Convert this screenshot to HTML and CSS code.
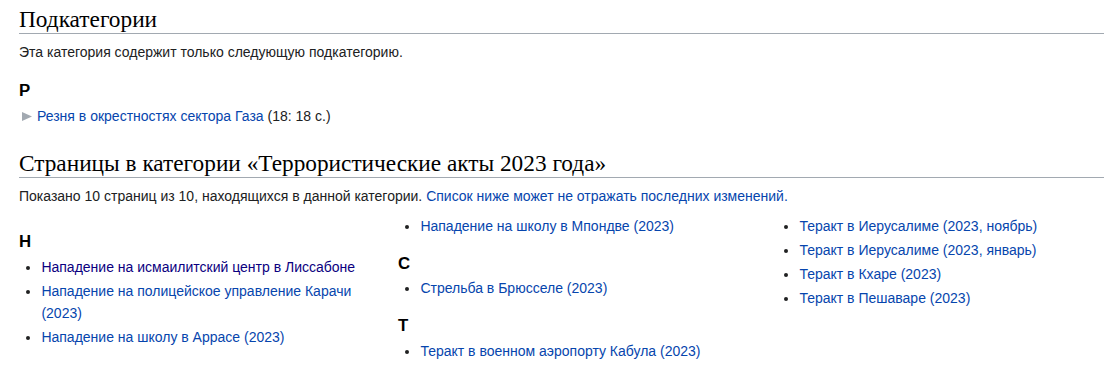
FILE: index.html
```html
<!DOCTYPE html>
<html lang="ru">
<head>
<meta charset="utf-8">
<title>Террористические акты 2023 года</title>
<link rel="stylesheet" href="styles.css">
</head>
<body>
<div class="content">
  <div class="section subcats">
    <h2 class="sec-title">Подкатегории</h2>
    <p class="sec-note">Эта категория содержит только следующую подкатегорию.</p>
    <div class="group">
      <h3 class="group-letter sub">Р</h3>
      <div class="tree-item"><span class="tree-bullet"><svg width="10" height="9" viewBox="0 0 10 9" aria-hidden="true"><polygon points="0,0 10,4.5 0,9" fill="#a2a9b1"/></svg></span><a class="link" href="#">Резня в окрестностях сектора Газа</a><span class="tree-count"> (18: 18 с.)</span></div>
    </div>
  </div>

  <div class="section pages">
    <h2 class="sec-title">Страницы в категории «Террористические акты 2023 года»</h2>
    <p class="sec-note">Показано 10 страниц из 10, находящихся в данной категории. <a class="link" href="#">Список ниже может не отражать последних изменений.</a></p>
    <div class="columns">
      <div class="col">
        <h3 class="group-letter first">Н</h3>
        <ul class="items">
          <li><a class="link visited" href="#">Нападение на исмаилитский центр в Лиссабоне</a></li>
          <li><a class="link" href="#">Нападение на полицейское управление Карачи (2023)</a></li>
          <li><a class="link" href="#">Нападение на школу в Аррасе (2023)</a></li>
        </ul>
      </div>
      <div class="col">
        <ul class="items">
          <li><a class="link" href="#">Нападение на школу в Мпондве (2023)</a></li>
        </ul>
        <h3 class="group-letter">С</h3>
        <ul class="items">
          <li><a class="link" href="#">Стрельба в Брюсселе (2023)</a></li>
        </ul>
        <h3 class="group-letter">Т</h3>
        <ul class="items">
          <li><a class="link" href="#">Теракт в военном аэропорту Кабула (2023)</a></li>
        </ul>
      </div>
      <div class="col">
        <ul class="items">
          <li><a class="link" href="#">Теракт в Иерусалиме (2023, ноябрь)</a></li>
          <li><a class="link" href="#">Теракт в Иерусалиме (2023, январь)</a></li>
          <li><a class="link" href="#">Теракт в Кхаре (2023)</a></li>
          <li><a class="link" href="#">Теракт в Пешаваре (2023)</a></li>
        </ul>
      </div>
    </div>
  </div>
</div>
</body>
</html>
```

FILE: styles.css
```css
html, body {
  margin: 0;
  padding: 0;
  background: #ffffff;
  overflow: hidden;
}

body {
  font-family: "Liberation Sans", Arial, sans-serif;
  font-size: 14px;
  color: #202122;
}

.content {
  padding: 6px 0 0 19px;
}

.sec-title {
  font-family: "Liberation Serif", "Times New Roman", serif;
  font-weight: normal;
  font-size: 23.3px;
  line-height: 27px;
  color: #000000;
  margin: 0;
  padding: 0;
  border-bottom: 1px solid #a2a9b1;
}

.pages {
  margin-top: 22px;
}

.sec-note {
  margin: 7px 0 0 0;
  line-height: 22.4px;
}

.link {
  color: #0645ad;
  text-decoration: none;
}

.link.visited {
  color: #0b0080;
}

.group-letter {
  font-size: 16.8px;
  font-weight: bold;
  line-height: 26.9px;
  margin: 13px 0 0 0;
  color: #000000;
}

.group-letter.sub {
  margin-top: 15px;
}

.group-letter.first {
  margin-top: 14px;
}

.tree-item {
  line-height: 22.4px;
  margin-top: 0;
  padding-left: 3px;
  display: flex;
  align-items: center;
}

.tree-bullet {
  display: flex;
  align-items: center;
  width: 15px;
  flex: none;
}

.tree-count {
  white-space: pre;
}

.columns {
  display: grid;
  grid-template-columns: 365px 365px 365px;
  column-gap: 14px;
  margin-top: 8px;
  align-items: start;
}

.items {
  margin: 0 0 0 22.4px;
  padding: 0;
  list-style: disc;
}

.items li {
  line-height: 22.4px;
  margin-bottom: 1.4px;
}
```
